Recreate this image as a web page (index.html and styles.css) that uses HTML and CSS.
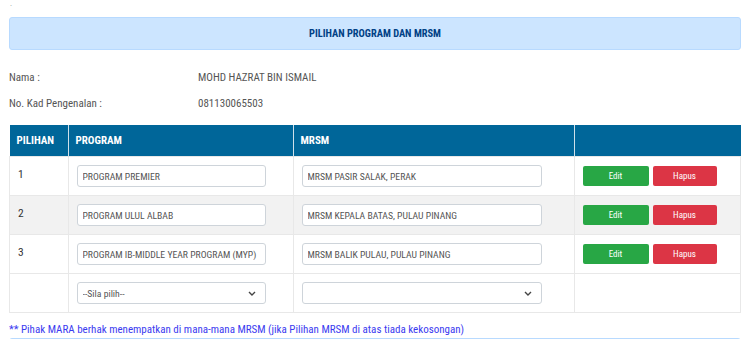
FILE: index.html
```html
<!DOCTYPE html>
<html lang="en">
<head>
    <meta charset="UTF-8">
    <title>Pilihan Program dan MRSM</title>
    <link rel="stylesheet" href="styles.css">
</head>
<body>
    <div class="dot">.</div>
    <div class="alert-box"><b>PILIHAN PROGRAM DAN MRSM</b></div>

    <div class="info">
        <div class="info-row"><span class="info-label">Nama :</span><span>MOHD HAZRAT BIN ISMAIL</span></div>
        <div class="info-row"><span class="info-label">No. Kad Pengenalan :</span><span>081130065503</span></div>
    </div>

    <table class="pilihan-table">
        <thead>
            <tr>
                <th class="col-no">PILIHAN</th>
                <th class="col-prog">PROGRAM</th>
                <th class="col-mrsm">MRSM</th>
                <th class="col-act"></th>
            </tr>
        </thead>
        <tbody>
            <tr>
                <td>1</td>
                <td><input class="field field-prog" type="text" value="PROGRAM PREMIER" readonly></td>
                <td><input class="field field-mrsm" type="text" value="MRSM PASIR SALAK, PERAK" readonly></td>
                <td><button class="btn btn-edit">Edit</button><button class="btn btn-hapus">Hapus</button></td>
            </tr>
            <tr class="stripe">
                <td>2</td>
                <td><input class="field field-prog" type="text" value="PROGRAM ULUL ALBAB" readonly></td>
                <td><input class="field field-mrsm" type="text" value="MRSM KEPALA BATAS, PULAU PINANG" readonly></td>
                <td><button class="btn btn-edit">Edit</button><button class="btn btn-hapus">Hapus</button></td>
            </tr>
            <tr>
                <td>3</td>
                <td><input class="field field-prog" type="text" value="PROGRAM IB-MIDDLE YEAR PROGRAM (MYP)" readonly></td>
                <td><input class="field field-mrsm" type="text" value="MRSM BALIK PULAU, PULAU PINANG" readonly></td>
                <td><button class="btn btn-edit">Edit</button><button class="btn btn-hapus">Hapus</button></td>
            </tr>
            <tr>
                <td></td>
                <td>
                    <div class="select-wrap field-prog">
                        <select class="field select"><option>--Sila pilih--</option></select>
                        <svg class="chev" width="8" height="5" viewBox="0 0 8 5"><path d="M1 1l3 3 3-3" fill="none" stroke="#444" stroke-width="1.4"/></svg>
                    </div>
                </td>
                <td>
                    <div class="select-wrap field-mrsm">
                        <select class="field select"><option></option></select>
                        <svg class="chev" width="8" height="5" viewBox="0 0 8 5"><path d="M1 1l3 3 3-3" fill="none" stroke="#444" stroke-width="1.4"/></svg>
                    </div>
                </td>
                <td></td>
            </tr>
        </tbody>
    </table>

    <p class="note">** Pihak MARA berhak menempatkan di mana-mana MRSM (jika Pilihan MRSM di atas tiada kekosongan)</p>
    <div class="alert-box next-box"></div>
</body>
</html>
```

FILE: styles.css
```css
body { font-family: "Roboto Condensed", "Liberation Sans Narrow", "DejaVu Sans Condensed", sans-serif; font-size: 11px; color: #555; margin: 0 10px 0 9px; overflow: hidden; height: 339px; }
.dot { font-size: 8px; color: #999; height: 17px; line-height: 8px; padding-left: 1px; }
.alert-box { background: #cce5ff; border: 1px solid #b8daff; border-radius: 3px; color: #004085; text-align: center; height: 31px; line-height: 31px; font-size: 10.4px; }
.info { padding-top: 15px; }
.info-row { display: flex; height: 26px; line-height: 26px; }
.info-label { width: 189px; }
.pilihan-table { width: 732px; border-collapse: collapse; margin-top: 8px; }
.pilihan-table th { background: #006699; color: #fff; text-align: left; font-size: 11px; height: 31px; padding: 0 7px; border-left: 1px solid #cfe0ea; }
.pilihan-table th:first-child { border-left: none; }
.col-no { width: 44px; }
.col-prog { width: 210px; }
.col-mrsm { width: 266px; }
.pilihan-table td { height: 38px; padding: 0 8px; border: 1px solid #e8e8e8; vertical-align: middle; color: #333; font-size: 11.5px; }
.pilihan-table td:first-child { vertical-align: top; padding-top: 10px; height: 28px; }
.pilihan-table tr.stripe td { background: #f2f2f2; }
.field { font-family: inherit; font-size: 9.7px; color: #555; height: 22px; border: 1px solid #ced4da; border-radius: 3px; background: #fff; padding: 0 5px; box-sizing: border-box; }
.field-prog { width: 189px; }
.field-mrsm { width: 240px; }
.select-wrap { position: relative; height: 22px; }
.select { width: 100%; appearance: none; -webkit-appearance: none; }
.chev { position: absolute; right: 10px; top: 9px; }
.btn { font-family: inherit; font-size: 9px; color: #fff; border: none; border-radius: 2px; height: 20px; width: 66px; margin-right: 4px; cursor: pointer; }
.btn-edit { background: #28a745; }
.btn-hapus { background: #dc3545; width: 64px; }
.note { color: #3b3bf0; font-size: 11px; margin: 9px 0 0 0; line-height: 16px; }
.next-box { margin-top: 0; }
```
